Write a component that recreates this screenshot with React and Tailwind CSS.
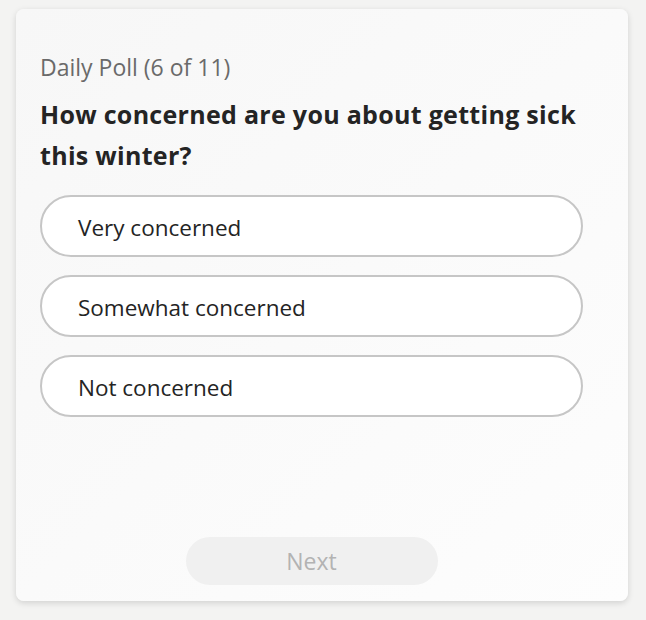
import React, { useState } from 'react';

const options = ['Very concerned', 'Somewhat concerned', 'Not concerned'];

const App = () => {
    const [selected, setSelected] = useState(null);

    return (
        <div className="h-[620px] w-[646px] bg-[#f3f3f2] pl-[16px] pt-[9px]" style={{ fontFamily: '"Open Sans", "Noto Sans", sans-serif' }}>
            <div className="flex h-[592px] w-[612px] flex-col rounded-lg bg-gradient-to-br from-[#f7f7f7] to-[#fdfdfd] px-6 pb-4 pt-[42px] shadow-[0_2px_6px_rgba(0,0,0,0.14)]">
                <p className="text-[23px] leading-[32px] text-[#6a6a6a]">Daily Poll (6 of 11)</p>
                <h1 className="mt-[11px] w-[560px] text-[25px] font-bold leading-[41px] tracking-[0.3px] text-[#242424]">
                    How concerned are you about getting sick this winter?
                </h1>
                <div className="mt-[19px] flex w-[543px] flex-col gap-[18px]">
                    {options.map((opt, i) => (
                        <button
                            key={opt}
                            onClick={() => setSelected(i)}
                            className={`h-[62px] rounded-full border-2 bg-white pl-[36px] pt-[3px] text-left text-[22.5px] text-[#242424] ${selected === i ? 'border-[#5b5fc7]' : 'border-[#c6c6c6]'}`}
                        >
                            {opt}
                        </button>
                    ))}
                </div>
                <div className="mt-auto flex w-[543px] justify-center">
                    <button disabled className="h-[48px] w-[252px] rounded-full bg-[#f0f0f0] pt-[1px] text-[23px] text-[#b3b3b3]">
                        Next
                    </button>
                </div>
            </div>
        </div>
    );
};

export default App;
